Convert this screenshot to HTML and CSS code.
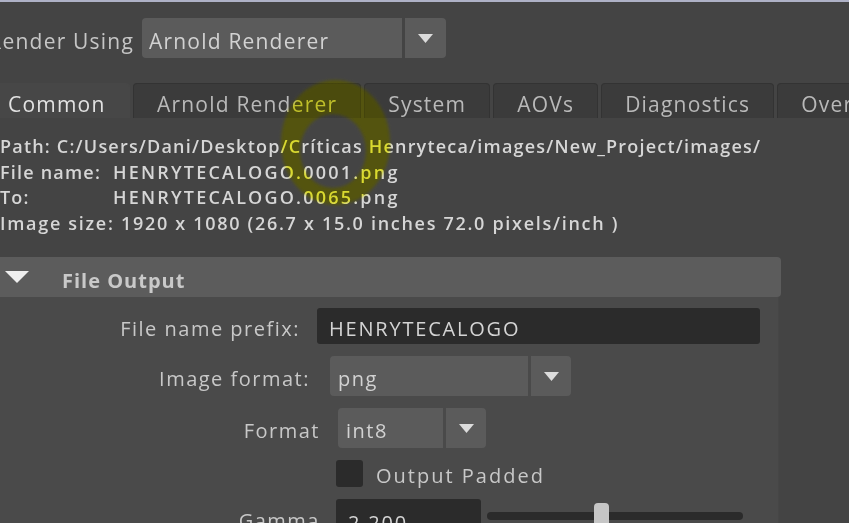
FILE: index.html
```html
<!DOCTYPE html>
<html>
<head>
<meta charset="utf-8">
<link rel="stylesheet" href="styles.css">
</head>
<body>
<div class="topline"></div>
<div class="window">
  <div class="render-row">
    <span class="render-label">Render Using</span>
    <div class="select select-renderer">
      <span class="select-value">Arnold Renderer</span>
      <span class="select-arrow"><svg width="15" height="9" viewBox="0 0 15 9"><polygon points="0,0 15,0 7.5,9" fill="#dcdcdc"/></svg></span>
    </div>
  </div>

  <div class="tabs">
    <div class="tab active">Common</div>
    <div class="tab">Arnold Renderer</div>
    <div class="tab">System</div>
    <div class="tab">AOVs</div>
    <div class="tab">Diagnostics</div>
    <div class="tab">Override</div>
  </div>

  <div class="content">
    <div class="info">
      <div class="info-line info-path">Path: C:/Users/Dani/Desktop/Críticas Henryteca/images/New_Project/images/</div>
      <div class="info-line info-pair"><span class="info-key">File name:</span><span class="info-value">HENRYTECALOGO.0001.png</span></div>
      <div class="info-line info-pair"><span class="info-key">To:</span><span class="info-value">HENRYTECALOGO.0065.png</span></div>
      <div class="info-line info-size">Image size: 1920 x 1080 (26.7 x 15.0 inches 72.0 pixels/inch )</div>
    </div>

    <div class="section">
      <div class="section-header">
        <svg class="section-toggle" width="24" height="12" viewBox="0 0 24 12"><polygon points="0,0 24,0 12,12" fill="#eeeeee"/></svg>
        <span class="section-title">File Output</span>
      </div>
      <div class="section-body">
        <div class="row row-prefix">
          <span class="label">File name prefix:</span>
          <div class="textfield field-prefix">HENRYTECALOGO</div>
        </div>
        <div class="row row-imgformat">
          <span class="label">Image format:</span>
          <div class="select select-imgformat">
            <span class="select-value">png</span>
            <span class="select-arrow"><svg width="15" height="9" viewBox="0 0 15 9"><polygon points="0,0 15,0 7.5,9" fill="#dcdcdc"/></svg></span>
          </div>
        </div>
        <div class="row row-format">
          <span class="label">Format</span>
          <div class="select select-format">
            <span class="select-value">int8</span>
            <span class="select-arrow"><svg width="15" height="9" viewBox="0 0 15 9"><polygon points="0,0 15,0 7.5,9" fill="#dcdcdc"/></svg></span>
          </div>
        </div>
        <div class="row row-check">
          <span class="checkbox"></span>
          <span class="check-label">Output Padded</span>
        </div>
        <div class="row row-gamma">
          <span class="label">Gamma</span>
          <div class="textfield field-gamma">2.200</div>
          <div class="slider">
            <div class="slider-track"></div>
            <div class="slider-thumb"></div>
          </div>
        </div>
      </div>
    </div>
  </div>

  <svg class="annotation" width="130" height="150" viewBox="0 0 130 150">
    <path fill-rule="evenodd" fill="#8a8a1c" d="M 11 72.5 a 54.5 62.5 0 1 0 109 0 a 54.5 62.5 0 1 0 -109 0 Z M 30 81 a 33 37 0 1 0 66 0 a 33 37 0 1 0 -66 0 Z"/>
  </svg>
</div>
</body>
</html>
```

FILE: styles.css
```css
html, body {
  margin: 0;
  padding: 0;
}
body {
  width: 849px;
  height: 523px;
  overflow: hidden;
  background: #444444;
  font-family: "Open Sans", "DejaVu Sans", sans-serif;
  color: #cfcfcf;
}
.topline {
  height: 2px;
  background: #aeb1c6;
}
.window {
  position: relative;
  margin-left: -16px;
  width: 920px;
}

/* Render Using row */
.render-row {
  display: flex;
  align-items: center;
  height: 40px;
  padding-top: 16px;
  gap: 8px;
}
.render-label {
  width: 150px;
  text-align: right;
  padding-top: 5px;
  font-size: 21px;
  letter-spacing: 1.2px;
  color: #c6c6c6;
  white-space: nowrap;
}

/* dropdowns */
.select {
  display: flex;
  height: 40px;
  gap: 3px;
}
.select-value {
  display: flex;
  align-items: center;
  box-sizing: border-box;
  background: #5b5b5b;
  border-radius: 4px 0 0 4px;
  padding: 5px 0 0 8px;
  font-size: 20px;
  letter-spacing: 1.5px;
  color: #d2d2d2;
}
.select-arrow {
  display: flex;
  align-items: center;
  justify-content: center;
  width: 40px;
  background: #5b5b5b;
  border-radius: 0 4px 4px 0;
}
.select-renderer .select-value { width: 260px; font-size: 21px; letter-spacing: 1.2px; padding-left: 7px; }
.select-renderer .select-arrow { width: 41px; }

/* tabs */
.tabs {
  display: flex;
  gap: 3px;
  margin-top: 25px;
  height: 35px;
  white-space: nowrap;
}
.tab {
  flex: none;
  box-sizing: border-box;
  height: 35px;
  padding: 5px 23px 0 23px;
  display: flex;
  align-items: center;
  font-size: 21px;
  letter-spacing: 1.2px;
  color: #b9b9b9;
  background: #3b3b3b;
  border: 1px solid #333333;
  border-bottom: none;
  border-radius: 4px 4px 0 0;
}
.tab.active {
  width: 146px;
  background: #474747;
  border-color: #474747;
  color: #e2e2e2;
}

/* info */
.info {
  padding: 16px 0 0 16px;
  font-size: 18px;
  font-weight: 600;
  line-height: 25.5px;
  color: #d6d6d6;
  white-space: nowrap;
}
.info-path { letter-spacing: 1.2px; }
.info-size { letter-spacing: 1.7px; }
.info-pair {
  display: flex;
  letter-spacing: 1.2px;
}
.info-key {
  width: 113px;
  flex: none;
}
.info-value { letter-spacing: 2.2px; }

/* section */
.section {
  width: 797px;
  margin-top: 21px;
}
.section-header {
  display: flex;
  align-items: center;
  height: 40px;
  background: #5c5c5c;
  border-radius: 0 4px 4px 0;
}
.section-toggle {
  margin-left: 21px;
}
.section-title {
  margin-left: 33px;
  padding-top: 6px;
  font-size: 20px;
  font-weight: 700;
  letter-spacing: 1px;
  color: #c9c9c9;
}
.section-body {
  width: 794px;
  height: 240px;
  background: #4a4a4a;
  border-right: 1px solid #464646;
  padding-top: 11px;
  display: flex;
  flex-direction: column;
  gap: 12px;
}

.row {
  display: flex;
  align-items: center;
  flex: none;
}
.label {
  flex: none;
  box-sizing: border-box;
  text-align: right;
  padding-top: 4px;
  font-size: 20px;
  letter-spacing: 1.5px;
  color: #c8c8c8;
  white-space: nowrap;
}
.textfield {
  box-sizing: border-box;
  display: flex;
  align-items: center;
  background: #2b2b2b;
  border-radius: 3px;
  padding: 4px 0 0 12px;
  font-size: 20px;
  letter-spacing: 1.8px;
  color: #d4d4d4;
}

.row-prefix { height: 36px; }
.row-prefix .label { width: 316px; margin-right: 17px; }
.field-prefix { width: 443px; height: 36px; }

.row-imgformat { height: 40px; }
.row-imgformat .label { width: 326px; margin-right: 20px; }
.select-imgformat .select-value { width: 198px; }

.row-format { height: 40px; }
.row-format .label { width: 336px; margin-right: 18px; }
.select-format .select-value { width: 105px; }

.row-check { height: 27px; padding-left: 352px; }
.checkbox {
  width: 27px;
  height: 27px;
  background: #2b2b2b;
  border-radius: 3px;
}
.check-label {
  margin-left: 13px;
  padding-top: 4px;
  font-size: 20px;
  letter-spacing: 2px;
  color: #c8c8c8;
}

.row-gamma { height: 40px; align-items: flex-start; }
.row-gamma .label { width: 336px; margin-right: 16px; padding-top: 8px; }
.field-gamma { width: 145px; height: 40px; align-items: flex-start; padding-top: 10px; }
.slider {
  position: relative;
  width: 256px;
  height: 40px;
  margin-left: 6px;
}
.slider-track {
  margin-top: 13px;
  height: 8px;
  background: #2b2b2b;
  border-radius: 4px;
}
.slider-thumb {
  position: absolute;
  left: 107px;
  top: 4px;
  width: 15px;
  height: 30px;
  background: #c6c6c6;
  border-radius: 4px;
}

/* hand-drawn highlight annotation */
.annotation {
  position: absolute;
  left: 286px;
  top: 68px;
  mix-blend-mode: hard-light;
  filter: blur(1.5px);
  pointer-events: none;
}
```
